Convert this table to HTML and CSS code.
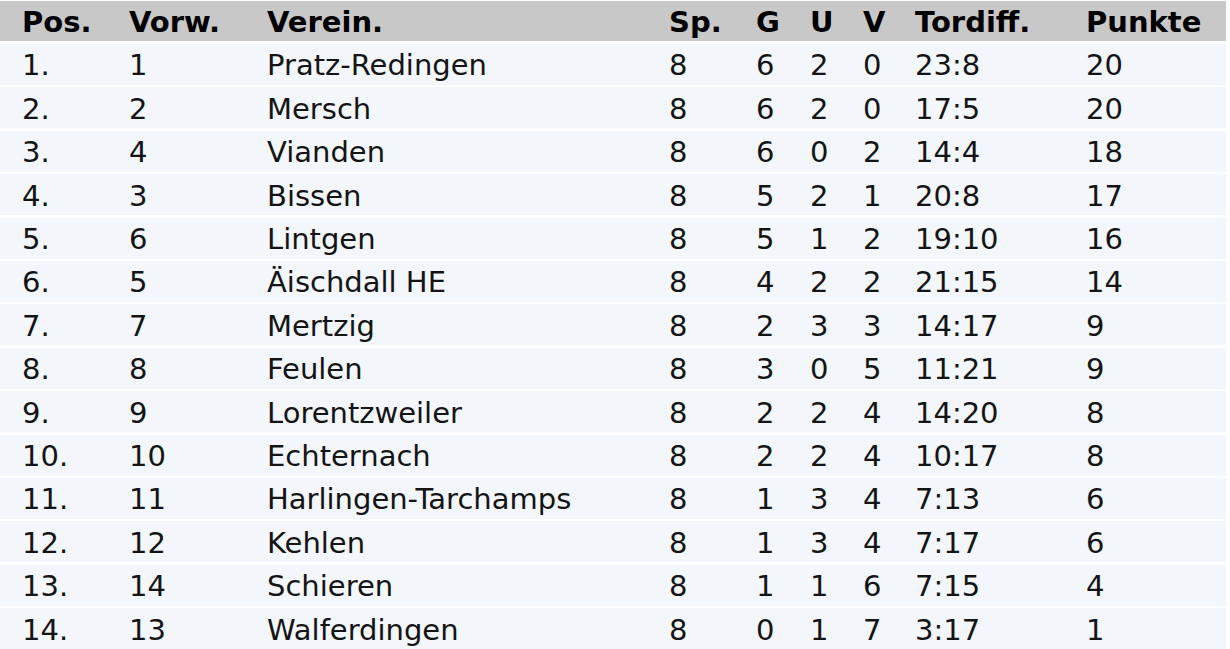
FILE: index.html
```html
<!DOCTYPE html>
<html lang="de">
<head>
<meta charset="utf-8">
<title>Tabelle</title>
<link rel="stylesheet" href="styles.css">
</head>
<body>
<div class="table">
  <div class="row head">
    <div>Pos.</div><div>Vorw.</div><div>Verein.</div><div>Sp.</div><div>G</div><div>U</div><div>V</div><div>Tordiff.</div><div>Punkte</div>
  </div>
  <div class="row"><div>1.</div><div>1</div><div>Pratz-Redingen</div><div>8</div><div>6</div><div>2</div><div>0</div><div>23:8</div><div>20</div></div>
  <div class="row"><div>2.</div><div>2</div><div>Mersch</div><div>8</div><div>6</div><div>2</div><div>0</div><div>17:5</div><div>20</div></div>
  <div class="row"><div>3.</div><div>4</div><div>Vianden</div><div>8</div><div>6</div><div>0</div><div>2</div><div>14:4</div><div>18</div></div>
  <div class="row"><div>4.</div><div>3</div><div>Bissen</div><div>8</div><div>5</div><div>2</div><div>1</div><div>20:8</div><div>17</div></div>
  <div class="row"><div>5.</div><div>6</div><div>Lintgen</div><div>8</div><div>5</div><div>1</div><div>2</div><div>19:10</div><div>16</div></div>
  <div class="row"><div>6.</div><div>5</div><div>Äischdall HE</div><div>8</div><div>4</div><div>2</div><div>2</div><div>21:15</div><div>14</div></div>
  <div class="row"><div>7.</div><div>7</div><div>Mertzig</div><div>8</div><div>2</div><div>3</div><div>3</div><div>14:17</div><div>9</div></div>
  <div class="row"><div>8.</div><div>8</div><div>Feulen</div><div>8</div><div>3</div><div>0</div><div>5</div><div>11:21</div><div>9</div></div>
  <div class="row"><div>9.</div><div>9</div><div>Lorentzweiler</div><div>8</div><div>2</div><div>2</div><div>4</div><div>14:20</div><div>8</div></div>
  <div class="row"><div>10.</div><div>10</div><div>Echternach</div><div>8</div><div>2</div><div>2</div><div>4</div><div>10:17</div><div>8</div></div>
  <div class="row"><div>11.</div><div>11</div><div>Harlingen-Tarchamps</div><div>8</div><div>1</div><div>3</div><div>4</div><div>7:13</div><div>6</div></div>
  <div class="row"><div>12.</div><div>12</div><div>Kehlen</div><div>8</div><div>1</div><div>3</div><div>4</div><div>7:17</div><div>6</div></div>
  <div class="row"><div>13.</div><div>14</div><div>Schieren</div><div>8</div><div>1</div><div>1</div><div>6</div><div>7:15</div><div>4</div></div>
  <div class="row"><div>14.</div><div>13</div><div>Walferdingen</div><div>8</div><div>0</div><div>1</div><div>7</div><div>3:17</div><div>1</div></div>
</div>
</body>
</html>
```

FILE: styles.css
```css
html, body {
  margin: 0;
  padding: 0;
  background: #ffffff;
  overflow: hidden;
}

.table {
  width: 1226px;
  display: flex;
  flex-direction: column;
  gap: 2.4px;
  font-family: "DejaVu Sans", Verdana, sans-serif;
  font-size: 29px;
  color: #141414;
}

.row {
  box-sizing: border-box;
  display: grid;
  grid-template-columns: 107px 138px 402px 87px 54px 53px 52px 171px 1fr;
  align-items: center;
  height: 41px;
  padding-left: 22px;
  padding-top: 2px;
  background: #f3f6fa;
  white-space: nowrap;
}

.row.head {
  height: 40px;
  padding-top: 1px;
  margin-top: 1px;
  margin-bottom: 0.6px;
  background: #c8c8c8;
  font-weight: bold;
  color: #000000;
}
```
